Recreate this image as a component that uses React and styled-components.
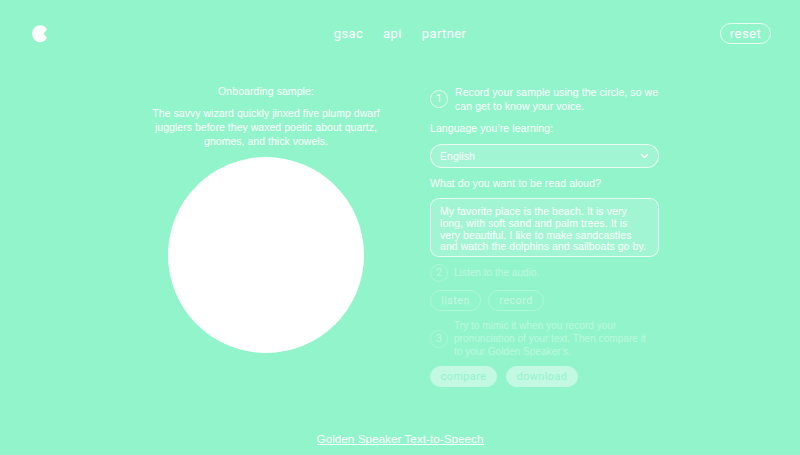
import React from "react";
import styled, { createGlobalStyle } from "styled-components";

const mint = "#92f4cb";
const outline = "rgba(255, 255, 255, 0.75)";
const faintOutline = "rgba(255, 255, 255, 0.6)";

const GlobalStyle = createGlobalStyle`
	* {
		box-sizing: border-box;
	}
	body {
		margin: 0;
		background: ${mint};
		color: #fff;
		font-family: "Liberation Sans", Arial, sans-serif;
		font-size: 10.5px;
		letter-spacing: 0.07px;
	}
`;

const Page = styled.div`
	display: flex;
	flex-direction: column;
	width: 800px;
	height: 455px;
	overflow: hidden;
`;

const Header = styled.header`
	display: grid;
	grid-template-columns: 1fr auto 1fr;
	align-items: center;
	height: 67px;
	padding: 0 29px 0 31px;
`;

const Logo = styled.svg`
	display: block;
	width: 17px;
	height: 18px;
`;

const Nav = styled.nav`
	display: flex;
	gap: 20px;
	margin-right: 2px;
`;

const NavLink = styled.a`
	color: #fff;
	font-family: Roboto, sans-serif;
	font-size: 13px;
	letter-spacing: 0.38px;
	line-height: 20px;
`;

const Button = styled.button`
	height: 21px;
	width: ${props => props.$width}px;
	padding: 0;
	border: 1px solid ${props => (props.$filled ? "#fff" : props.$border || outline)};
	border-radius: 11px;
	background: ${props => (props.$filled ? "#fff" : "transparent")};
	color: ${props => (props.$filled ? mint : "#fff")};
	opacity: ${props => props.$opacity || 1};
	font-family: Roboto, sans-serif;
	font-size: ${props => props.$size || 10.8}px;
	letter-spacing: 0.45px;
	line-height: 18px;
	justify-self: end;
`;

const Main = styled.main`
	display: flex;
	height: 355px;
	padding: 17px 141px 0 142px;
	gap: 40px;
`;

const Sample = styled.section`
	display: flex;
	flex-direction: column;
	align-items: center;
	width: 248px;
	text-align: center;
	line-height: 14px;
`;

const SampleText = styled.p`
	margin: 8px 0 9px;
	letter-spacing: 0.03px;
	white-space: pre;
`;

const RecordCircle = styled.div`
	width: 196px;
	height: 196px;
	border-radius: 50%;
	background: #fff;
`;

const Steps = styled.section`
	display: flex;
	flex-direction: column;
	width: 229px;
`;

const Step = styled.div`
	display: flex;
	align-items: center;
	gap: ${props => props.$gap || 7}px;
	height: ${props => props.$height}px;
	opacity: ${props => props.$opacity || 1};
	line-height: 14px;
	white-space: pre;
`;

const UpcomingStep = styled(Step)`
	font-size: 10.1px;
	letter-spacing: 0;
	line-height: 13.2px;
`;

const StepNumber = styled.div`
	flex: none;
	width: 18px;
	height: 18px;
	border: 1px solid ${props => (props.$faint ? faintOutline : outline)};
	border-radius: 50%;
	font-family: Roboto, sans-serif;
	letter-spacing: 0;
	line-height: 16px;
	text-align: center;
`;

const Label = styled.label`
	height: 14px;
	margin-top: ${props => props.$top}px;
	line-height: 14px;
`;

const Select = styled.div`
	display: flex;
	align-items: center;
	justify-content: space-between;
	height: 24px;
	margin-top: 9px;
	padding: 0 9px;
	border: 1px solid ${outline};
	border-radius: 12px;
	background: rgba(255, 255, 255, 0.15);
`;

const TextBox = styled.div`
	height: 59px;
	margin-top: 8px;
	padding: 7px 9px 5px;
	border: 1px solid ${outline};
	border-radius: 9px;
	background: rgba(255, 255, 255, 0.15);
	line-height: 11.8px;
	white-space: pre;
`;

const ButtonRow = styled.div`
	display: flex;
	gap: ${props => props.$gap}px;
	margin-top: ${props => props.$top}px;
`;

const Footer = styled.footer`
	display: flex;
	justify-content: center;
	padding-top: 9px;
`;

const FooterLink = styled.a`
	height: 14px;
	border-bottom: 1px solid #fff;
	color: #fff;
	font-size: 11.75px;
	line-height: 15px;
	letter-spacing: 0;
`;

const sampleText = "The savvy wizard quickly jinxed five plump dwarf\njugglers before they waxed poetic about quartz,\ngnomes, and thick vowels.";
const readAloud = "My favorite place is the beach. It is very\nlong, with soft sand and palm trees. It is\nvery beautiful. I like to make sandcastles\nand watch the dolphins and sailboats go by.";

export default function App() {
	return (
		<Page>
			<GlobalStyle />
			<Header>
				<Logo viewBox="0 0 17 18">
					<path d="M16 4.4 12.6 8.6 16 12.9A8 8.5 0 1 1 16 4.4Z" fill="#fff" />
				</Logo>
				<Nav>
					<NavLink>gsac</NavLink>
					<NavLink>api</NavLink>
					<NavLink>partner</NavLink>
				</Nav>
				<Button $width={51} $size={13}>reset</Button>
			</Header>
			<Main>
				<Sample>
					<div>Onboarding sample:</div>
					<SampleText>{sampleText}</SampleText>
					<RecordCircle />
				</Sample>
				<Steps>
					<Step $height={30}>
						<StepNumber>1</StepNumber>
						<div>{"Record your sample using the circle, so we\ncan get to know your voice."}</div>
					</Step>
					<Label $top={7}>Language you’re learning:</Label>
					<Select>
						English
						<svg width="9" height="6" viewBox="0 0 9 6">
							<path d="M1 1 4.5 4.5 8 1" fill="none" stroke="#fff" strokeWidth="1.4" />
						</svg>
					</Select>
					<Label $top={8}>What do you want to be read aloud?</Label>
					<TextBox>{readAloud}</TextBox>
					<UpcomingStep $height={32} $gap={6} $opacity={0.4}>
						<StepNumber $faint>2</StepNumber>
						<div>Listen to the audio.</div>
					</UpcomingStep>
					<ButtonRow $gap={7} $top={1}>
						<Button $width={51} $border={faintOutline} $opacity={0.45}>listen</Button>
						<Button $width={56} $border={faintOutline} $opacity={0.45}>record</Button>
					</ButtonRow>
					<UpcomingStep $height={55} $gap={6} $opacity={0.38}>
						<StepNumber $faint>3</StepNumber>
						<div>{"Try to mimic it when you record your\npronunciation of your text. Then compare it\nto your Golden Speaker’s."}</div>
					</UpcomingStep>
					<ButtonRow $gap={9} $top={0}>
						<Button $width={67} $filled $opacity={0.45}>compare</Button>
						<Button $width={72} $filled $opacity={0.45}>download</Button>
					</ButtonRow>
				</Steps>
			</Main>
			<Footer>
				<FooterLink>Golden Speaker Text-to-Speech</FooterLink>
			</Footer>
		</Page>
	);
}
